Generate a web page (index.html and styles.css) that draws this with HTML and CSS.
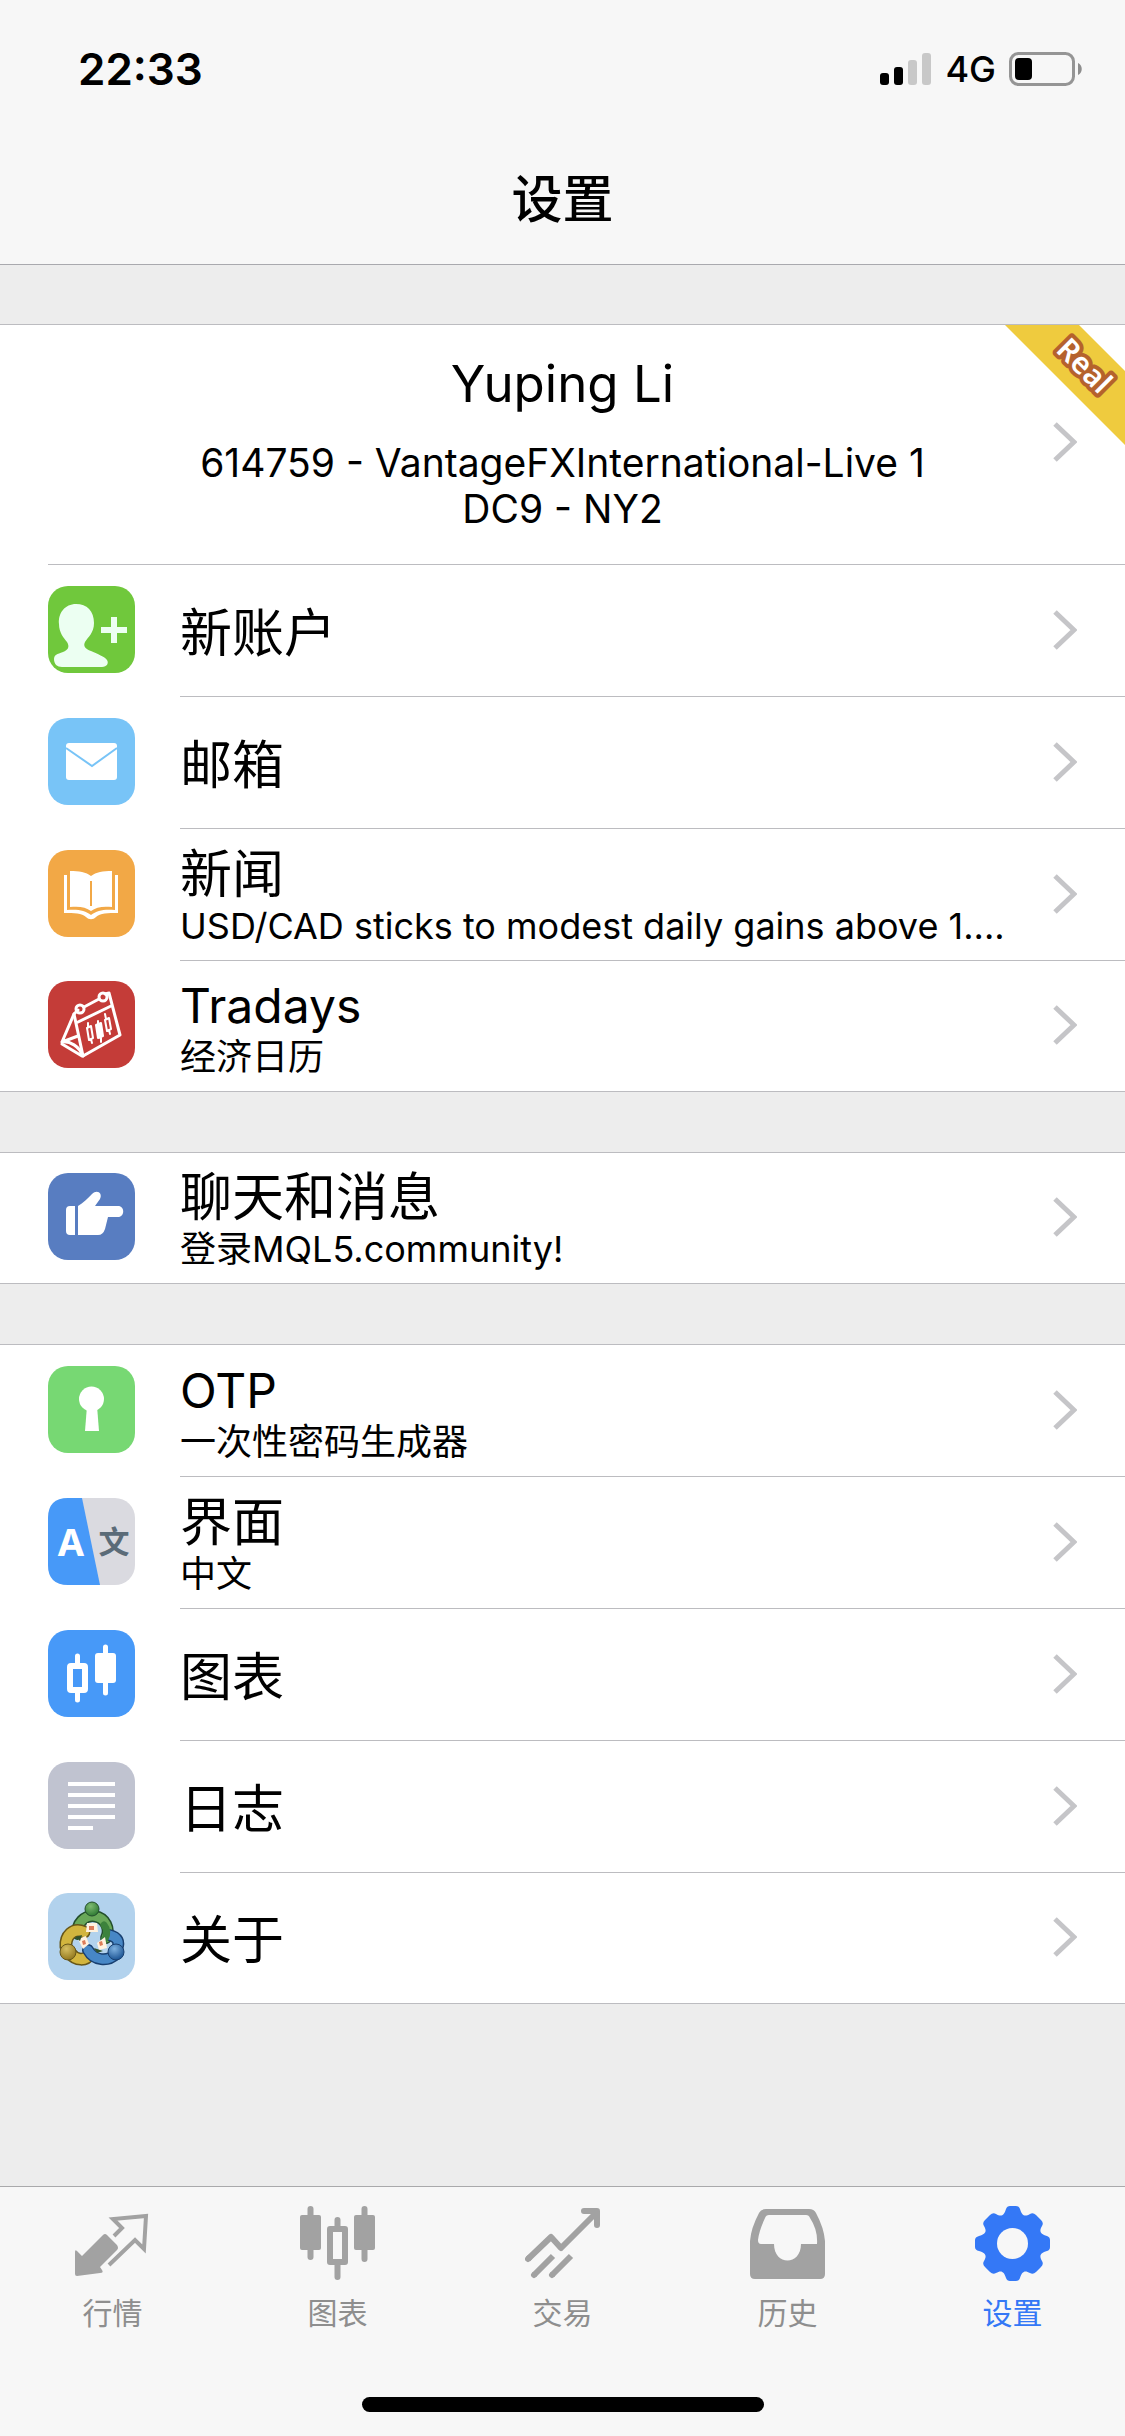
FILE: index.html
```html
<!DOCTYPE html>
<html lang="zh-CN">
<head>
    <meta charset="UTF-8">
    <title>设置</title>
    <meta name="viewport" content="width=device-width, initial-scale=1.0">
    <link rel="stylesheet" href="styles.css">
</head>
<body>
    <svg class="sprite" aria-hidden="true">
        <symbol id="chevron" viewBox="0 0 24 40">
            <path d="M2 2l19 18L2 38" fill="none" stroke="#c5c5c8" stroke-width="5"/>
        </symbol>
    </svg>

    <header class="header">
        <div class="status">
            <span class="time">22:33</span>
            <div class="status-right">
                <svg width="52" height="34" viewBox="0 0 52 34">
                    <rect x="0" y="21" width="9" height="12" rx="3"/>
                    <rect x="14" y="15" width="9" height="18" rx="3"/>
                    <rect x="28" y="8" width="9" height="25" rx="3" fill="#c8c8c8"/>
                    <rect x="42" y="1" width="9" height="32" rx="3" fill="#c8c8c8"/>
                </svg>
                <span class="network">4G</span>
                <svg width="74" height="34" viewBox="0 0 74 34">
                    <rect x="1.5" y="1.5" width="63" height="31" rx="8" fill="none" stroke="#959595" stroke-width="3"/>
                    <rect x="6" y="6" width="17" height="22" rx="4"/>
                    <path d="M69 11c5 2 5 10 0 12z" fill="#8e8e8e"/>
                </svg>
            </div>
        </div>
        <h1>设置</h1>
    </header>

    <main>
        <ul class="group">
            <li>
                <a href="#" class="account">
                    <div class="account-info">
                        <h2>Yuping Li</h2>
                        <p>614759 - VantageFXInternational-Live 1<br>DC9 - NY2</p>
                    </div>
                    <svg class="chevron"><use href="#chevron"/></svg>
                    <svg class="ribbon" viewBox="0 0 120 120">
                        <path d="M0 0h74l46 46v74z" fill="#efcb3e"/>
                        <text x="79" y="51" text-anchor="middle" transform="rotate(45 79 41)">Real</text>
                    </svg>
                </a>
            </li>
            <li>
                <a href="#" class="row">
                    <svg class="icon" viewBox="0 0 87 87">
                        <rect width="87" height="87" rx="20" fill="#70c83c"/>
                        <path d="M28 18c-11 0-18 9-17 20 0 9 5 14 8 18 3 5 1 8-4 10-6 2-9 3-9 7 0 5 3 8 8 8h40c5 0 7-4 5-7-3-4-10-6-16-9-6-2-8-5-6-9 3-5 9-9 9-19 0-12-7-19-18-19z" fill="#ecfff2"/>
                        <path d="M53 44h26M66 31v26" stroke="#ecfff2" stroke-width="6"/>
                    </svg>
                    <div class="body">
                        <span class="title">新账户</span>
                    </div>
                    <svg class="chevron"><use href="#chevron"/></svg>
                </a>
            </li>
            <li>
                <a href="#" class="row">
                    <svg class="icon" viewBox="0 0 87 87">
                        <rect width="87" height="87" rx="20" fill="#78c4f7"/>
                        <rect x="18" y="25" width="51" height="37" rx="3" fill="#fff"/>
                        <path d="M18 30l26 18 25-18" fill="none" stroke="#78c4f7" stroke-width="2"/>
                    </svg>
                    <div class="body">
                        <span class="title">邮箱</span>
                    </div>
                    <svg class="chevron"><use href="#chevron"/></svg>
                </a>
            </li>
            <li>
                <a href="#" class="row">
                    <svg class="icon" viewBox="0 0 87 87">
                        <rect width="87" height="87" rx="20" fill="#f2a846"/>
                        <path d="M22 21c9 0 16 1 21 5 5-4 12-5 21-5v36c-9-1-16 0-21 4-5-4-12-5-21-4z" fill="#fff"/>
                        <path d="M43 31v25" stroke="#f2a846" stroke-width="2"/>
                        <path d="M16 25h3v35c10-1 18 0 24 5 6-5 14-6 24-5V25h3v38c-10 0-18 0-22 4-3 3-7 3-10 0-4-4-12-4-22-4z" fill="#fff"/>
                    </svg>
                    <div class="body">
                        <span class="title">新闻</span>
                        <span class="sub">USD/CAD sticks to modest daily gains above 1....</span>
                    </div>
                    <svg class="chevron"><use href="#chevron"/></svg>
                </a>
            </li>
            <li>
                <a href="#" class="row">
                    <svg class="icon" viewBox="0 0 87 87">
                        <rect width="87" height="87" rx="20" fill="#c43c38"/>
                        <g fill="none" stroke="#fff" stroke-width="3" stroke-linejoin="round" stroke-linecap="round">
                            <path d="M36 26l15-8M61 12l11 42-37 21-9-42 4-4M61 12l-4 1M28 42l35-17"/>
                            <path d="M26 33L14 61c8-1 17 4 21 14M14 61l16-6M14 63l20 12"/>
                            <circle cx="32" cy="28" r="4"/>
                            <circle cx="55" cy="16" r="4"/>
                            <path d="M39 47l4-2 2 12-4 2zM40 42v4M43 58l1 4M57 39l4-2 2 11-4 2zM57 33l1 5M61 49l1 4" stroke-width="2"/>
                            <path d="M48 44l5-2 2 13-5 2zM50 40v4M53 56v5" fill="#fff" stroke-width="2"/>
                        </g>
                    </svg>
                    <div class="body">
                        <span class="title latin">Tradays</span>
                        <span class="sub">经济日历</span>
                    </div>
                    <svg class="chevron"><use href="#chevron"/></svg>
                </a>
            </li>
        </ul>

        <ul class="group">
            <li>
                <a href="#" class="row">
                    <svg class="icon" viewBox="0 0 87 87">
                        <rect width="87" height="87" rx="20" fill="#587dc1"/>
                        <path d="M27 33v29h-5q-4 0-4-4V37q0-4 4-4zM30 33c5-3 10-8 14-12 5-5 11-1 8 5l-5 7h23c7 0 7 11 0 11H60l-3 12q-2 6-7 6H30z" fill="#fff"/>
                    </svg>
                    <div class="body">
                        <span class="title">聊天和消息</span>
                        <span class="sub">登录MQL5.community!</span>
                    </div>
                    <svg class="chevron"><use href="#chevron"/></svg>
                </a>
            </li>
        </ul>

        <ul class="group">
            <li>
                <a href="#" class="row">
                    <svg class="icon" viewBox="0 0 87 87">
                        <rect width="87" height="87" rx="20" fill="#77d873"/>
                        <circle cx="43.5" cy="33" r="12.5" fill="#fff"/>
                        <path d="M39 40h10l2 25H37z" fill="#fff"/>
                    </svg>
                    <div class="body">
                        <span class="title latin">OTP</span>
                        <span class="sub">一次性密码生成器</span>
                    </div>
                    <svg class="chevron"><use href="#chevron"/></svg>
                </a>
            </li>
            <li>
                <a href="#" class="row">
                    <svg class="icon" viewBox="0 0 87 87">
                        <rect width="87" height="87" rx="20" fill="#dadae0"/>
                        <path d="M20 0h14l18 87H20Q0 87 0 67V20Q0 0 20 0z" fill="#4799f8"/>
                        <text class="lang-a" x="23" y="58" text-anchor="middle">A</text>
                        <text class="lang-wen" x="66" y="55" text-anchor="middle">文</text>
                    </svg>
                    <div class="body">
                        <span class="title">界面</span>
                        <span class="sub">中文</span>
                    </div>
                    <svg class="chevron"><use href="#chevron"/></svg>
                </a>
            </li>
            <li>
                <a href="#" class="row">
                    <svg class="icon" viewBox="0 0 87 87">
                        <rect width="87" height="87" rx="20" fill="#4799f8"/>
                        <rect x="22" y="36" width="15" height="24" rx="1" fill="none" stroke="#fff" stroke-width="6"/>
                        <rect x="47" y="23" width="21" height="30" rx="3" fill="#fff"/>
                        <path d="M29.500 26v8M29.500 62v8M57.500 17v10M57.500 50v13" stroke="#fff" stroke-width="5" stroke-linecap="round"/>
                    </svg>
                    <div class="body">
                        <span class="title">图表</span>
                    </div>
                    <svg class="chevron"><use href="#chevron"/></svg>
                </a>
            </li>
            <li>
                <a href="#" class="row">
                    <svg class="icon" viewBox="0 0 87 87">
                        <rect width="87" height="87" rx="20" fill="#c0c3d0"/>
                        <path d="M20 22h47M20 33h47M20 44h47M20 55h47M20 66h25" stroke="#fff" stroke-width="4"/>
                    </svg>
                    <div class="body">
                        <span class="title">日志</span>
                    </div>
                    <svg class="chevron"><use href="#chevron"/></svg>
                </a>
            </li>
            <li>
                <a href="#" class="row">
                    <svg class="icon" viewBox="0 0 87 87">
                        <defs>
                            <radialGradient id="green" cx=".4" cy=".3" r=".7"><stop offset="0" stop-color="#7fbb72"/><stop offset="1" stop-color="#2f7a33"/></radialGradient>
                            <radialGradient id="gold" cx=".4" cy=".3" r=".7"><stop offset="0" stop-color="#d6bf62"/><stop offset="1" stop-color="#94791f"/></radialGradient>
                            <radialGradient id="blue" cx=".4" cy=".3" r=".7"><stop offset="0" stop-color="#7db0df"/><stop offset="1" stop-color="#1d5594"/></radialGradient>
                        </defs>
                        <rect width="87" height="87" rx="20" fill="#b2d2ed"/>
                        <g fill="none" stroke-linecap="round">
                            <path d="M30 41a15 15 0 1 1 28 4" stroke="#234e2c" stroke-width="12"/>
                            <path d="M30 41a15 15 0 1 1 28 4" stroke="#69a859" stroke-width="9"/>
                            <path d="M36 39c-11-5-19 4-18 15M22 60c6 8 16 8 20 1" stroke="#665619" stroke-width="13"/>
                            <path d="M36 39c-11-5-19 4-18 15M22 60c6 8 16 8 20 1" stroke="#d2b53e" stroke-width="10"/>
                            <path d="M61 42c9 2 11 7 8 14M40 57c6 11 20 12 28 4" stroke="#183f70" stroke-width="12"/>
                            <path d="M61 42c9 2 11 7 8 14M40 57c6 11 20 12 28 4" stroke="#4787c6" stroke-width="9"/>
                            <path d="M56 32c4 5 3 10 1 14" stroke="#3c823c" stroke-width="7"/>
                        </g>
                        <path d="M39 30h10l1 9H38zM30 46l8-3 3 8-6 5zM57 44l-8 6 2 7 8-2z" fill="#fff2df"/>
                        <path d="M41 33h5v4h-5zM34 48l3-1 1 4-3 1zM51 49l3-1 1 4-3 1z" fill="#dc7c59"/>
                        <path d="M27 44l7-2-2 6zM46 55l9 3-6 2z" fill="#31522d"/>
                        <circle cx="44" cy="16" r="7" fill="url(#green)" stroke="#234e2c"/>
                        <circle cx="20" cy="59" r="8" fill="url(#gold)" stroke="#665619"/>
                        <circle cx="68" cy="59" r="8" fill="url(#blue)" stroke="#183f70"/>
                    </svg>
                    <div class="body">
                        <span class="title">关于</span>
                    </div>
                    <svg class="chevron"><use href="#chevron"/></svg>
                </a>
            </li>
        </ul>
    </main>

    <footer class="footer">
        <nav class="tabs">
            <a href="#">
                <svg viewBox="0 0 75 75">
                    <path d="M28 29q2-2 4 0l10 10q2 3 0 5L25 61l2 3q2 3-2 3L2 70q-2 0-2-2V46q0-3 2-1l5 5z" fill="#a2a2a2"/>
                    <path d="M39 30l8-8-9-9 33-3-2 33-9-9-26 25" fill="none" stroke="#a2a2a2" stroke-width="4"/>
                </svg>
                行情
            </a>
            <a href="#">
                <svg viewBox="0 0 75 75">
                    <g fill="#a2a2a2">
                        <rect y="9" width="21" height="35" rx="2"/>
                        <rect x="54" y="9" width="21" height="35" rx="2"/>
                    </g>
                    <path d="M10.500 3v48M64.500 3v50M37.500 14v8M37.500 59v12" stroke="#a2a2a2" stroke-width="6" stroke-linecap="round"/>
                    <rect x="30" y="23" width="15" height="33" fill="none" stroke="#a2a2a2" stroke-width="6" stroke-linejoin="round"/>
                </svg>
                图表
            </a>
            <a href="#">
                <svg viewBox="0 0 75 75">
                    <g fill="none" stroke="#a2a2a2" stroke-width="6">
                        <path d="M3 53l23-22 10 11L72 6" stroke-linejoin="round"/>
                        <path d="M3 53l1-1M59 5h13v14M9 69l.1-.1M27 69l.1-.1" stroke-linecap="round" stroke-linejoin="round"/>
                        <path d="M9 69l19-19M27 69l19-19"/>
                    </g>
                </svg>
                交易
            </a>
            <a href="#">
                <svg viewBox="0 0 75 75">
                    <path fill-rule="evenodd" d="M16 3h43q5 0 7 4 8 15 9 28v33q0 5-5 5H5q-5 0-5-5V35Q1 22 9 7q2-4 7-4zM19 9q-3 0-4 3-6 13-7 22 0 4 3 4h13c0 22 27 22 27 0h16q1-14-7-26-1-3-4-3z" fill="#a2a2a2"/>
                </svg>
                历史
            </a>
            <a href="#" class="active">
                <svg viewBox="0 0 75 75">
                    <path d="M31 3q1-3 4-3h6q3 0 4 3c2 7 5 8 10 5q3-2 6 1l5 5q3 3 1 6c-3 5-2 8 5 10q3 1 3 4v7q0 3-3 4c-7 2-8 5-5 10q2 3-1 6l-5 5q-3 3-6 1c-5-3-8-2-10 5q-1 3-4 3h-6q-3 0-4-3c-2-7-5-8-10-5q-3 2-6-1l-5-5q-3-3-1-6c3-5 2-8-5-10q-4-1-4-4v-7q0-3 4-4c7-2 8-5 5-10q-2-3 1-6l5-5q3-3 6-1c5 3 8 2 10-5z" fill="#3478f6"/>
                    <circle cx="37.500" cy="37.500" r="15.500" fill="#f7f7f7"/>
                </svg>
                设置
            </a>
        </nav>
        <div class="home-bar"></div>
    </footer>
</body>
</html>
```
FILE: styles.css
```css
* {
    box-sizing: border-box;
}
body {
    margin: 0;
    min-height: 100vh;
    display: flex;
    flex-direction: column;
    background-color: #ededed;
    color: #000;
    font-family: Inter, "Noto Sans CJK SC", sans-serif;
}
h1, h2, p, ul {
    margin: 0;
    padding: 0;
}
ul {
    list-style: none;
}
a {
    color: inherit;
    text-decoration: none;
}
.sprite {
    display: none;
}

/* top bar */
.header {
    background-color: #f7f7f7;
    border-bottom: 1px solid #a9a9ae;
}
.status {
    display: flex;
    justify-content: space-between;
    align-items: center;
    height: 138px;
    padding: 0 42px 0 78px;
}
.status-right {
    display: flex;
    align-items: center;
    gap: 13px;
}
.time {
    font-size: 44px;
    font-weight: 600;
}
.network {
    font-size: 36px;
    font-weight: 500;
}
h1 {
    height: 126px;
    line-height: 124px;
    font-size: 51px;
    font-weight: 500;
    text-align: center;
}

/* lists */
main {
    display: flex;
    flex-direction: column;
    gap: 60px;
    padding: 59px 0;
}
.group {
    background-color: #fff;
    border: solid #bcbcc0;
    border-width: 1px 0;
}
.account {
    position: relative;
    display: flex;
    align-items: center;
    height: 240px;
    margin-left: 48px;
    padding: 0 48px 4px 24px;
    border-bottom: 1px solid #bcbcc0;
}
.account-info {
    flex: 1;
    text-align: center;
}
h2 {
    margin-bottom: 26px;
    font-size: 51px;
    line-height: 60px;
    font-weight: 400;
}
.account p {
    font-size: 39px;
    line-height: 46px;
}
.ribbon {
    position: absolute;
    top: 0;
    right: 0;
    width: 120px;
    height: 120px;
}
.ribbon text {
    font: 600 30px "Noto Sans", sans-serif;
    fill: #fff;
    stroke: #b5622c;
    stroke-width: 8px;
    stroke-linejoin: round;
    paint-order: stroke;
}
.row {
    display: flex;
    align-items: center;
    padding: 0 48px;
}
.icon {
    width: 87px;
    height: 87px;
    margin: 0 45px 4px 0;
}
.body {
    flex: 1;
    display: flex;
    flex-direction: column;
    justify-content: center;
    height: 132px;
    margin-right: -72px;
    padding: 6px 72px 0 0;
    border-bottom: 1px solid #bcbcc0;
    white-space: nowrap;
}
li:last-child .body {
    height: 130px;
    border-bottom: 0;
}
.title {
    font-size: 52px;
    line-height: 56px;
}
.title.latin {
    font-size: 48px;
}
.sub {
    font-size: 36px;
    line-height: 46px;
}
.chevron {
    width: 24px;
    height: 40px;
    margin-bottom: 2px;
}
.lang-a {
    font: 700 38px "Noto Sans", sans-serif;
    fill: #fff;
}
.lang-wen {
    font: 700 31px "Noto Sans CJK SC", sans-serif;
    fill: #5b6b78;
}

/* bottom bar */
.footer {
    margin-top: auto;
    padding-bottom: 24px;
    background-color: #f7f7f7;
    border-top: 1px solid #a9a9ab;
}
.tabs {
    display: flex;
    height: 210px;
    padding-top: 19px;
}
.tabs a {
    flex: 1;
    display: flex;
    flex-direction: column;
    align-items: center;
    gap: 10px;
    font-size: 30px;
    line-height: 44px;
    color: #8e8e8e;
}
.tabs svg {
    width: 75px;
    height: 75px;
}
.tabs .active {
    color: #3478f6;
}
.home-bar {
    width: 402px;
    height: 15px;
    margin: 0 auto;
    border-radius: 8px;
    background-color: #000;
}
```
